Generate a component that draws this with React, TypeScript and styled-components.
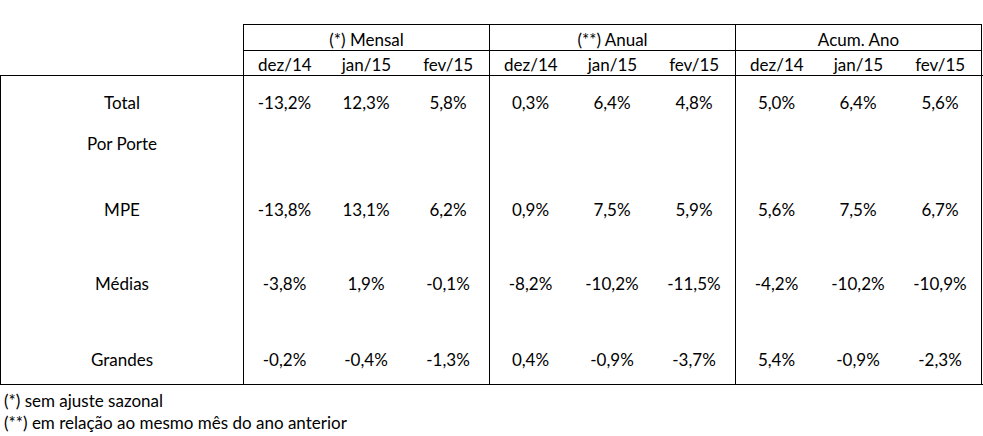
import React from "react";
import styled, { createGlobalStyle } from "styled-components";

const Global = createGlobalStyle`
  html, body { margin: 0; padding: 0; background: #fff; }
  body { font-family: Lato, "Open Sans", sans-serif; color: #000; }
`;

const Page = styled.div`
  width: 983px;
  padding-top: 24px;
  font-size: 17px;
`;

const HeadGrid = styled.div`
  display: grid;
  grid-template-columns: 243px 246px 246px 247px;
`;

const Group = styled.div<{ $last?: boolean }>`
  border-left: 1px solid #000;
  border-right: ${(p) => (p.$last ? "1px solid #000" : "none")};
  display: flex;
  flex-direction: column;
`;

const GroupTitle = styled.div`
  border-top: 1px solid #000;
  height: 25px;
  line-height: 20px;
  display: flex;
  align-items: flex-end;
  justify-content: center;
`;

const SubRow = styled.div`
  border-top: 1px solid #000;
  height: 24px;
  display: grid;
  grid-template-columns: repeat(3, 1fr);
`;

const SubCell = styled.div`
  line-height: 20px;
  display: flex;
  align-items: flex-end;
  justify-content: center;
`;

const Body = styled.div`
  border-top: 1px solid #000;
  border-bottom: 1px solid #000;
  display: grid;
  grid-template-columns: 243px 82px 82px 82px 82px 82px 82px 82px 82px 83px;
  grid-template-rows: 51px 41px 66px 74px 76px;
`;

const Cell = styled.div<{ $lead?: boolean; $end?: boolean }>`
  border-left: ${(p) => (p.$lead ? "1px solid #000" : "none")};
  border-right: ${(p) => (p.$end ? "1px solid #000" : "none")};
  display: flex;
  align-items: flex-end;
  justify-content: center;
  line-height: 20px;
  padding-bottom: 14px;
`;

const Notes = styled.div`
  padding: 5px 0 0 4px;
  line-height: 22px;
`;

const groups = ["(*) Mensal", "(**) Anual", "Acum. Ano"];
const months = ["dez/14", "jan/15", "fev/15"];

const rows: { label: string; values: string[] }[] = [
  { label: "Total", values: ["-13,2%", "12,3%", "5,8%", "0,3%", "6,4%", "4,8%", "5,0%", "6,4%", "5,6%"] },
  { label: "Por Porte", values: ["", "", "", "", "", "", "", "", ""] },
  { label: "MPE", values: ["-13,8%", "13,1%", "6,2%", "0,9%", "7,5%", "5,9%", "5,6%", "7,5%", "6,7%"] },
  { label: "Médias", values: ["-3,8%", "1,9%", "-0,1%", "-8,2%", "-10,2%", "-11,5%", "-4,2%", "-10,2%", "-10,9%"] },
  { label: "Grandes", values: ["-0,2%", "-0,4%", "-1,3%", "0,4%", "-0,9%", "-3,7%", "5,4%", "-0,9%", "-2,3%"] },
];

export default function App() {
  return (
    <>
      <Global />
      <Page>
        <HeadGrid>
          <div />
          {groups.map((g, i) => (
            <Group key={g} $last={i === 2}>
              <GroupTitle>{g}</GroupTitle>
              <SubRow>
                {months.map((m) => (
                  <SubCell key={m}>{m}</SubCell>
                ))}
              </SubRow>
            </Group>
          ))}
        </HeadGrid>
        <Body>
          {rows.map((r) => (
            <React.Fragment key={r.label}>
              <Cell $lead>{r.label}</Cell>
              {r.values.map((v, i) => (
                <Cell key={i} $lead={i % 3 === 0} $end={i === 8}>
                  {v}
                </Cell>
              ))}
            </React.Fragment>
          ))}
        </Body>
        <Notes>
          <div>(*) sem ajuste sazonal</div>
          <div>(**) em relação ao mesmo mês do ano anterior</div>
        </Notes>
      </Page>
    </>
  );
}
